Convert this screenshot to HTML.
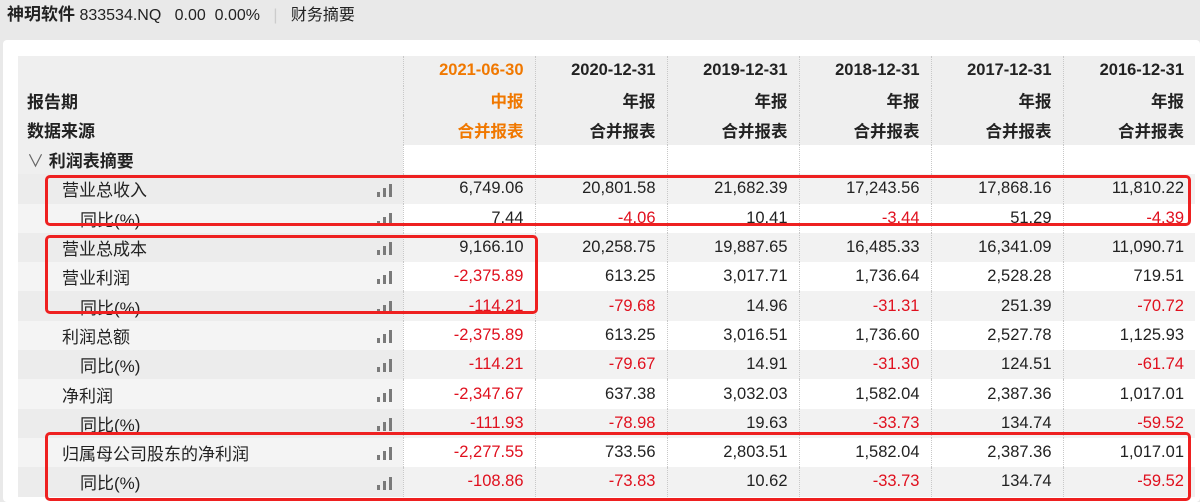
<!DOCTYPE html>
<html><head><meta charset="utf-8"><style>
*{margin:0;padding:0;box-sizing:border-box}
body{width:1200px;height:502px;overflow:hidden;background:#e9e9e9;font-family:"Liberation Sans","Noto Sans CJK SC",sans-serif;color:#222;position:relative}
.top{position:absolute;left:0;top:0;height:32px;width:1200px;font-size:16px;line-height:30px;padding-left:7px}
.top b{font-size:17px}
.card{position:absolute;left:3px;top:40px;width:1197px;height:462px;background:#fff;border-radius:4px}
table{position:absolute;left:18px;top:56px;border-collapse:collapse;font-size:16.5px}
td{padding:0 11px 0 0;text-align:right;white-space:nowrap}
td.l{text-align:left;width:385px;position:relative;padding:0;font-size:17px}
td.d{width:132px;border-left:1px dotted #c8c8c8}
tr.h td{background:#efefef;font-weight:bold;height:29.6px;font-size:16.5px}
tr.h td.l{font-size:17px}
td.o{color:#f07800!important}
tr.s td{height:29.5px;background:#fff}
tr.s td.l{background:#efefef;font-weight:bold;padding-left:9px}
tr.a td{background:#f2f2f2;height:29.3px}
tr.a td.l{background:#ececec}
tr.b td{background:#fff;height:29.3px}
tr.b td.l{background:#f4f4f4}
.r{color:#e0101e}
.i1{padding-left:44px!important}
.i2{padding-left:62px!important}
.bar{position:absolute;right:11px;bottom:7px;width:15px;height:13px}
.bar i{position:absolute;bottom:0;width:3px;background:#7a7a7a}
.box{position:absolute;border:3px solid #ee2020;border-radius:5px}
</style></head><body>
<div class="top"><b>神玥软件</b> 833534.NQ &nbsp;&nbsp;0.00 &nbsp;0.00% &nbsp;&nbsp;<span style="color:#ccc">|</span>&nbsp;&nbsp; 财务摘要</div>
<div class="card"></div>
<table>
<tr class="h"><td class="l"></td><td class="d o">2021-06-30</td><td class="d">2020-12-31</td><td class="d">2019-12-31</td><td class="d">2018-12-31</td><td class="d">2017-12-31</td><td class="d">2016-12-31</td></tr>
<tr class="h"><td class="l" style="padding-left:9px">报告期</td><td class="d o">中报</td><td class="d">年报</td><td class="d">年报</td><td class="d">年报</td><td class="d">年报</td><td class="d">年报</td></tr>
<tr class="h"><td class="l" style="padding-left:9px">数据来源</td><td class="d o">合并报表</td><td class="d">合并报表</td><td class="d">合并报表</td><td class="d">合并报表</td><td class="d">合并报表</td><td class="d">合并报表</td></tr>
<tr class="s"><td class="l"><span style="font-weight:normal;color:#666">∨</span> 利润表摘要</td><td class="d"></td><td class="d"></td><td class="d"></td><td class="d"></td><td class="d"></td><td class="d"></td></tr>
<tr class="a"><td class="l i1">营业总收入<span class="bar"><i style="left:0;height:5px"></i><i style="left:6px;height:9px"></i><i style="left:12px;height:13px"></i></span></td><td class="d">6,749.06</td><td class="d">20,801.58</td><td class="d">21,682.39</td><td class="d">17,243.56</td><td class="d">17,868.16</td><td class="d">11,810.22</td></tr>
<tr class="b"><td class="l i2">同比(%)<span class="bar"><i style="left:0;height:5px"></i><i style="left:6px;height:9px"></i><i style="left:12px;height:13px"></i></span></td><td class="d">7.44</td><td class="d r">-4.06</td><td class="d">10.41</td><td class="d r">-3.44</td><td class="d">51.29</td><td class="d r">-4.39</td></tr>
<tr class="a"><td class="l i1">营业总成本<span class="bar"><i style="left:0;height:5px"></i><i style="left:6px;height:9px"></i><i style="left:12px;height:13px"></i></span></td><td class="d">9,166.10</td><td class="d">20,258.75</td><td class="d">19,887.65</td><td class="d">16,485.33</td><td class="d">16,341.09</td><td class="d">11,090.71</td></tr>
<tr class="b"><td class="l i1">营业利润<span class="bar"><i style="left:0;height:5px"></i><i style="left:6px;height:9px"></i><i style="left:12px;height:13px"></i></span></td><td class="d r">-2,375.89</td><td class="d">613.25</td><td class="d">3,017.71</td><td class="d">1,736.64</td><td class="d">2,528.28</td><td class="d">719.51</td></tr>
<tr class="a"><td class="l i2">同比(%)<span class="bar"><i style="left:0;height:5px"></i><i style="left:6px;height:9px"></i><i style="left:12px;height:13px"></i></span></td><td class="d r">-114.21</td><td class="d r">-79.68</td><td class="d">14.96</td><td class="d r">-31.31</td><td class="d">251.39</td><td class="d r">-70.72</td></tr>
<tr class="b"><td class="l i1">利润总额<span class="bar"><i style="left:0;height:5px"></i><i style="left:6px;height:9px"></i><i style="left:12px;height:13px"></i></span></td><td class="d r">-2,375.89</td><td class="d">613.25</td><td class="d">3,016.51</td><td class="d">1,736.60</td><td class="d">2,527.78</td><td class="d">1,125.93</td></tr>
<tr class="a"><td class="l i2">同比(%)<span class="bar"><i style="left:0;height:5px"></i><i style="left:6px;height:9px"></i><i style="left:12px;height:13px"></i></span></td><td class="d r">-114.21</td><td class="d r">-79.67</td><td class="d">14.91</td><td class="d r">-31.30</td><td class="d">124.51</td><td class="d r">-61.74</td></tr>
<tr class="b"><td class="l i1">净利润<span class="bar"><i style="left:0;height:5px"></i><i style="left:6px;height:9px"></i><i style="left:12px;height:13px"></i></span></td><td class="d r">-2,347.67</td><td class="d">637.38</td><td class="d">3,032.03</td><td class="d">1,582.04</td><td class="d">2,387.36</td><td class="d">1,017.01</td></tr>
<tr class="a"><td class="l i2">同比(%)<span class="bar"><i style="left:0;height:5px"></i><i style="left:6px;height:9px"></i><i style="left:12px;height:13px"></i></span></td><td class="d r">-111.93</td><td class="d r">-78.98</td><td class="d">19.63</td><td class="d r">-33.73</td><td class="d">134.74</td><td class="d r">-59.52</td></tr>
<tr class="b"><td class="l i1">归属母公司股东的净利润<span class="bar"><i style="left:0;height:5px"></i><i style="left:6px;height:9px"></i><i style="left:12px;height:13px"></i></span></td><td class="d r">-2,277.55</td><td class="d">733.56</td><td class="d">2,803.51</td><td class="d">1,582.04</td><td class="d">2,387.36</td><td class="d">1,017.01</td></tr>
<tr class="a"><td class="l i2">同比(%)<span class="bar"><i style="left:0;height:5px"></i><i style="left:6px;height:9px"></i><i style="left:12px;height:13px"></i></span></td><td class="d r">-108.86</td><td class="d r">-73.83</td><td class="d">10.62</td><td class="d r">-33.73</td><td class="d">134.74</td><td class="d r">-59.52</td></tr>
</table>
<div class="box" style="left:45px;top:175px;width:1146px;height:51px"></div>
<div class="box" style="left:45px;top:235px;width:493px;height:79px"></div>
<div class="box" style="left:45px;top:432px;width:1146px;height:69px"></div>
</body></html>
